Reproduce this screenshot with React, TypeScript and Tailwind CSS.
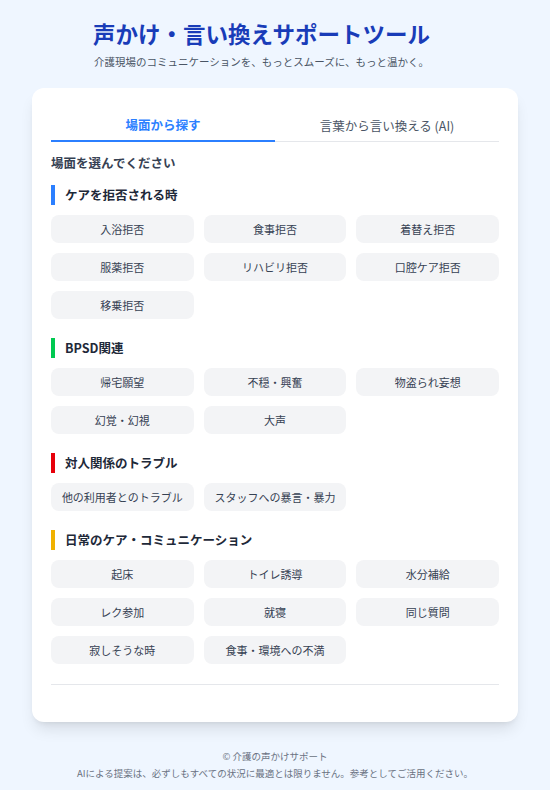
const font = { fontFamily: '"Noto Sans CJK JP", "Noto Sans", sans-serif' }

const sections = [
  {
    title: "ケアを拒否される時",
    bar: "border-blue-500",
    items: ["入浴拒否", "食事拒否", "着替え拒否", "服薬拒否", "リハビリ拒否", "口腔ケア拒否", "移乗拒否"],
  },
  {
    title: "BPSD関連",
    bar: "border-green-500",
    items: ["帰宅願望", "不穏・興奮", "物盗られ妄想", "幻覚・幻視", "大声"],
  },
  {
    title: "対人関係のトラブル",
    bar: "border-red-600",
    items: ["他の利用者とのトラブル", "スタッフへの暴言・暴力"],
  },
  {
    title: "日常のケア・コミュニケーション",
    bar: "border-yellow-500",
    items: ["起床", "トイレ誘導", "水分補給", "レク参加", "就寝", "同じ質問", "寂しそうな時", "食事・環境への不満"],
  },
]

export default function App() {
  return (
    <div className="min-h-[790px] bg-blue-50 px-8 pt-[18px] pb-4" style={font}>
      <header className="mr-[27px] flex flex-col items-center">
        <h1 className="text-[22.5px] leading-[30px] font-bold text-blue-800">声かけ・言い換えサポートツール</h1>
        <p className="mt-[6px] text-[10.5px] leading-4 text-gray-600">
          介護現場のコミュニケーションを、もっとスムーズに、もっと温かく。
        </p>
      </header>

      <main className="mt-[18px] rounded-xl bg-white px-[19px] pt-5 pb-[37px] shadow-lg">
        <div className="flex border-b border-gray-200">
          <button className="flex-1 -mb-px border-b-2 border-blue-500 pt-[7px] pb-[5px] text-[12.5px] leading-5 font-semibold text-blue-500">
            場面から探す
          </button>
          <button className="flex-1 pt-[7px] pb-[5px] text-[12.5px] leading-5 text-gray-600">
            言葉から言い換える (AI)
          </button>
        </div>

        <p className="mt-[11px] text-[12.5px] leading-5 font-semibold text-gray-700">場面を選んでください</p>

        <div className="mt-3 flex flex-col gap-[19px]">
          {sections.map(s => (
            <section key={s.title}>
              <h2 className={`border-l-4 ${s.bar} pl-2.5 text-[12.5px] leading-5 font-bold text-gray-800`}>
                {s.title}
              </h2>
              <div className="mt-2.5 grid grid-cols-3 gap-2.5">
                {s.items.map(item => (
                  <button key={item} className="h-7 rounded-lg bg-gray-100 text-[11px] text-gray-700">
                    {item}
                  </button>
                ))}
              </div>
            </section>
          ))}
        </div>

        <hr className="mt-5 border-gray-200" />
      </main>

      <footer className="mt-[26px] text-center text-[9.5px] leading-[17px] text-gray-500">
        <p>© 介護の声かけサポート</p>
        <p>AIによる提案は、必ずしもすべての状況に最適とは限りません。参考としてご活用ください。</p>
      </footer>
    </div>
  )
}
